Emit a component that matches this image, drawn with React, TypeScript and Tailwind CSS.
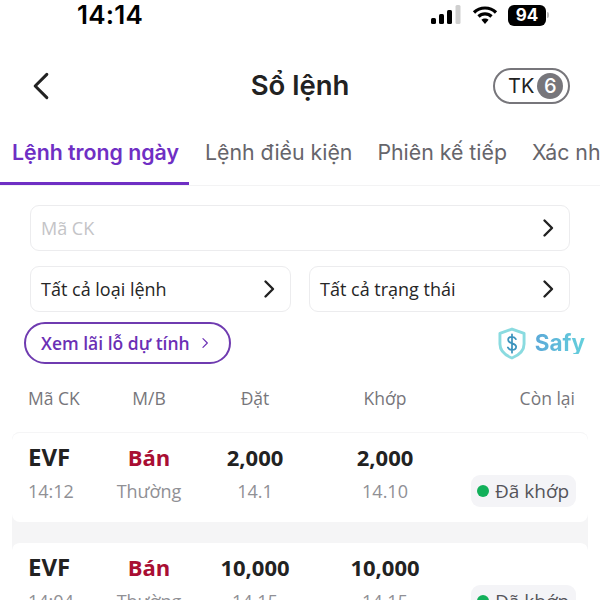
const UI = "font-['Inter',sans-serif]";
const BODY = "font-['Open_Sans',sans-serif]";

interface Order {
  code: string;
  side: string;
  time: string;
  kind: string;
  qty: string;
  price: string;
  matched: string;
  matchedPrice: string;
}

const ORDERS: Order[] = [
  { code: 'EVF', side: 'Bán', time: '14:12', kind: 'Thường', qty: '2,000', price: '14.1', matched: '2,000', matchedPrice: '14.10' },
  { code: 'EVF', side: 'Bán', time: '14:04', kind: 'Thường', qty: '10,000', price: '14.15', matched: '10,000', matchedPrice: '14.15' },
];

const GRID = 'grid grid-cols-[67px_108px_104px_156px_1fr] items-center';

function Chevron({ className = 'w-[22px] h-[22px]', width = 2.4 }: { className?: string; width?: number }) {
  return (
    <svg viewBox="0 0 24 24" className={className} fill="none" stroke="currentColor" strokeWidth={width} strokeLinecap="round" strokeLinejoin="round">
      <path d="M8.5 4.5 16 12l-7.5 7.5" />
    </svg>
  );
}

function StatusBar() {
  return (
    <div className="h-[30px] relative flex items-center text-black">
      <span className={`${UI} ml-[77px] text-[26px] font-semibold leading-none tracking-[0.2px]`}>14:14</span>
      <div className="ml-auto mr-[51px] flex items-center">
        <svg width="31" height="20" viewBox="0 0 31 20" className="mr-[10px]">
          <rect x="0" y="13" width="5" height="6" rx="1.5" fill="#000" />
          <rect x="8" y="9" width="5" height="10" rx="1.5" fill="#000" />
          <rect x="16" y="5" width="5" height="14" rx="1.5" fill="#000" />
          <rect x="24.5" y="0" width="5" height="19" rx="1.5" fill="#cfcfcf" />
        </svg>
        <svg width="26" height="20" viewBox="0 0 26 20" className="mr-[10px]" fill="none" stroke="#000" strokeWidth="3.2">
          <path d="M2 7.5C8 1.5 18 1.5 24 7.5" />
          <path d="M6.5 11.5C10 8 16 8 19.5 11.5" />
          <path d="M13 19l-3.6-4.2C11.4 13 14.6 13 16.6 14.8z" fill="#000" stroke="none" />
        </svg>
        <div className={`${UI} w-[38px] h-[21px] rounded-[6px] bg-black text-white text-[17px] font-bold flex items-center justify-center leading-none`}>94</div>
        <div className="w-[2px] h-[6px] rounded-r bg-[#bdbdbd] ml-[1px]" />
      </div>
    </div>
  );
}

function NavBar() {
  return (
    <div className="h-[74px] mt-[19px] flex items-center relative">
      <svg viewBox="0 0 24 36" className="w-[20px] h-[30px] ml-[31px] text-[#222]" fill="none" stroke="currentColor" strokeWidth="3.6" strokeLinecap="round" strokeLinejoin="round">
        <path d="M19 4 5 18l14 14" />
      </svg>
      <h1 className={`${UI} absolute left-0 right-0 text-center text-[27.5px] font-semibold text-[#222]`}>Sổ lệnh</h1>
      <div className="ml-auto mr-[30px] w-[77px] h-[36px] rounded-full border-2 border-[#77767b] flex items-center pl-[13px] gap-[3px]">
        <span className={`${UI} text-[20px] text-[#222] leading-none`}>TK</span>
        <span className={`${UI} w-[26px] h-[26px] rounded-full bg-[#77767b] text-white text-[20px] font-medium flex items-center justify-center leading-none`}>6</span>
      </div>
    </div>
  );
}

function Tabs() {
  return (
    <div className={`${UI} h-[63px] border-b border-[#f3f3f4] flex overflow-hidden whitespace-nowrap text-[21.3px] text-[#66656b] relative`}>
      <div className="w-[189px] shrink-0 pl-[12px] pt-[14px] border-b-[3px] border-[#6f2fc4] text-[#6f2fc4] font-semibold">Lệnh trong ngày</div>
      <div className="shrink-0 ml-[16px] pt-[14px]">Lệnh điều kiện</div>
      <div className="shrink-0 ml-[25px] pt-[14px]">Phiên kế tiếp</div>
      <div className="shrink-0 ml-[25px] pt-[14px]">Xác nhận</div>
    </div>
  );
}

function Select({ label, muted, className = '' }: { label: string; muted?: boolean; className?: string }) {
  return (
    <div className={`${BODY} h-[46px] rounded-[9px] border border-[#ececee] pl-[10px] pr-[9px] flex items-center justify-between text-[18px] ${muted ? 'text-[#c4c4c7]' : 'text-[#262626]'} ${className}`}>
      <span>{label}</span>
      <Chevron className="w-[24px] h-[24px] text-[#222]" />
    </div>
  );
}

function Filters() {
  return (
    <div>
      <div className="pt-[19px] px-[30px] flex flex-col gap-[15px]">
        <Select label="Mã CK" muted />
        <div className="flex gap-[18px]">
          <Select label="Tất cả loại lệnh" className="flex-1" />
          <Select label="Tất cả trạng thái" className="flex-1" />
        </div>
      </div>
      <div className="h-[42px] mt-[10px] pl-[24px] pr-[15px] flex items-center justify-between">
        <div className={`${BODY} w-[207px] h-[42px] rounded-full border-2 border-[#6f3bb0] pl-[15px] flex items-center gap-[8px] text-[17.5px] font-semibold text-[#6b2fb5]`}>
          <span>Xem lãi lỗ dự tính</span>
          <Chevron className="w-[14px] h-[14px] text-[#6b2fb5]" width={2} />
        </div>
        <div className="flex items-center gap-[9px]">
          <svg width="28" height="33" viewBox="0 0 29 34" fill="none">
            <path d="M14.5 2 27 6.5v11c0 7-5 11.5-12.5 14.5C7 29 2 24.5 2 17.5v-11z" stroke="#8adbe0" strokeWidth="3" strokeLinejoin="round" />
            <path d="M18.5 12.5c-.8-1.6-2.2-2.3-4-2.3-2.3 0-4 1.2-4 3.2 0 4.4 8.3 2.4 8.3 6.9 0 2-1.8 3.3-4.3 3.3-2 0-3.5-.8-4.3-2.5M14.5 7.5v19" stroke="#3c93bd" strokeWidth="1.8" strokeLinecap="round" />
          </svg>
          <span className={`${UI} text-[22.5px] font-bold leading-none text-transparent bg-clip-text bg-gradient-to-r from-[#5ca9d8] to-[#64d0dc]`}>Safy</span>
        </div>
      </div>
    </div>
  );
}

function TableHead() {
  return (
    <div className={`${BODY} ${GRID} pl-[28px] pr-[25px] h-[68px] text-[17.5px] text-[#77767b]`}>
      <span>Mã CK</span>
      <span className="text-center">M/B</span>
      <span className="text-center">Đặt</span>
      <span className="text-center">Khớp</span>
      <span className="text-right whitespace-nowrap">Còn lại</span>
    </div>
  );
}

function OrderCard({ order }: { order: Order }) {
  return (
    <div className={`${BODY} bg-white rounded-[8px] h-[90px] pl-[16px] pr-[12px] pt-[10px] border-t border-[#f5f5f6]`}>
      <div className={`${GRID} h-[32px] font-bold text-[22px] text-[#222] mt-[-4px]`}>
        <span className="text-[24px]">{order.code}</span>
        <span className="text-center text-[#a90e33]">{order.side}</span>
        <span className="text-center">{order.qty}</span>
        <span className="text-center">{order.matched}</span>
        <span />
      </div>
      <div className={`${GRID} h-[32px] mt-[4px] text-[18px] text-[#909095]`}>
        <span>{order.time}</span>
        <span className="text-center">{order.kind}</span>
        <span className="text-center">{order.price}</span>
        <span className="text-center">{order.matchedPrice}</span>
        <div className="justify-self-end w-[105px] h-[32px] rounded-[9px] bg-[#f4f4f7] pl-[6px] flex items-center gap-[6px] text-[19px] text-[#55545a] whitespace-nowrap">
          <span className="w-[12px] h-[12px] rounded-full bg-[#12b05a] shrink-0" />
          <span>Đã khớp</span>
        </div>
      </div>
    </div>
  );
}

export default function App() {
  return (
    <div className="w-[600px] h-[600px] bg-white overflow-hidden">
      <StatusBar />
      <NavBar />
      <Tabs />
      <Filters />
      <TableHead />
      <div className="mx-[12px] bg-[#f5f5f6] flex flex-col gap-[20px] rounded-t-[8px]">
        {ORDERS.map((order, index) => (
          <OrderCard key={index} order={order} />
        ))}
      </div>
    </div>
  );
}
